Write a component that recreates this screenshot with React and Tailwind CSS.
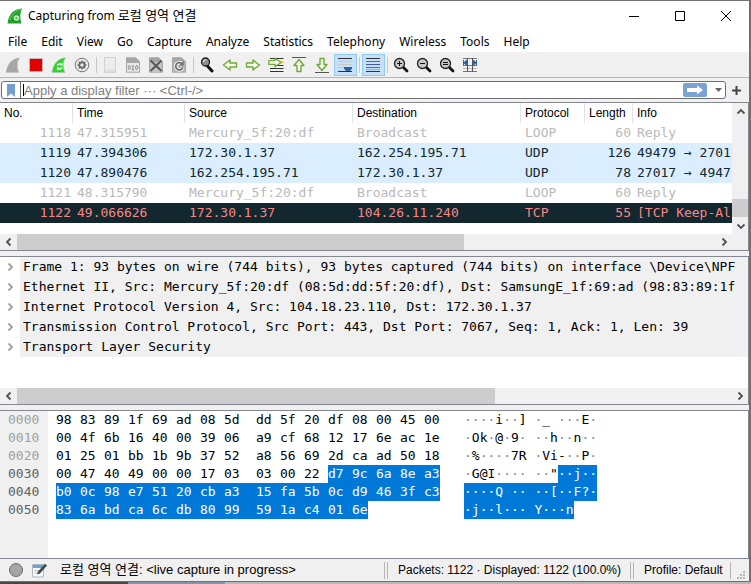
import React from "react";

const UI = "font-['Noto_Sans','Noto_Sans_CJK_KR',sans-serif]";
const GRID = "font-['Liberation_Sans','Noto_Sans_CJK_KR',sans-serif]";
const MONO = "font-['DejaVu_Sans_Mono','Noto_Sans_CJK_KR',monospace]";

const Svg = ({ children, className = "size-4 shrink-0", box = "0 0 16 16" }) => (
  <svg viewBox={box} className={className} fill="none" aria-hidden="true">
    {children}
  </svg>
);

const FIN = "M1 15.5C2 8 6 1.5 14.5 .8 11.5 5 11.8 11 14 15.5Z";
const ARROW_R = "M1.5 6H8V3L14.5 8 8 13V10H1.5Z";
const GREEN = "#73a839";

const Fin = () => (
  <Svg>
    <path d={FIN} fill="#a6a6a6" />
    <path d="M1 15.5H14M14.5 .8C11.5 5 11.8 11 14 15.5" stroke="#c4c4c4" />
  </Svg>
);
const Stop = () => (
  <Svg>
    <rect x="1.5" y="1.5" width="13" height="13" fill="#e00000" stroke="#c8b4b4" />
  </Svg>
);
const Restart = () => (
  <Svg>
    <path d={FIN} fill="#2fd32f" stroke="#a8c8a8" strokeWidth=".8" />
    <path d="M6.400 8.600A2.800 2.800 0 0 1 10.500 7.300M11 10.200A2.800 2.800 0 0 1 6.900 11.700" stroke="#fff" strokeWidth="1.3" />
    <path d="M11.600 5.600V8.600H8.700ZM5.900 13.400V10.400H8.800Z" fill="#fff" />
  </Svg>
);
const Options = () => (
  <Svg>
    <circle cx="8" cy="8" r="6.800" fill="#ececec" stroke="#777" />
    <circle cx="8" cy="8" r="3.6" fill="#6b6b6b" />
    <path d="M8 3.500v9M3.500 8h9M4.800 4.800l6.400 6.400M11.200 4.800l-6.400 6.400" stroke="#6b6b6b" strokeWidth="1.5" />
    <circle cx="8" cy="8" r="1.7" fill="#ececec" />
  </Svg>
);
const OpenFile = () => (
  <Svg>
    <path d="M2.5 .5H13.500V15.5H2.5Z" fill="#ececec" stroke="#d2d2d2" />
    <path d="M3 12.5H13V15H3Z" fill="#dedede" />
  </Svg>
);
const Sheet = () => (
  <>
    <path d="M1.5 .8H10.5L14.5 4.5V15.2H1.5Z" fill="#e9e9e9" stroke="#a6a6a6" />
    <path d="M1.5 .8H10.5L14.5 4.5V6H1.5Z" fill="#a6a6a6" />
  </>
);
const Save = () => (
  <Svg>
    <Sheet />
    <ellipse cx="4.3" cy="10.5" rx="1.1" ry="2" stroke="#888" />
    <path d="M8 8.2V13M7 9h1M6.8 12.8h2.4" stroke="#888" />
    <ellipse cx="11.7" cy="10.5" rx="1.1" ry="2" stroke="#888" />
  </Svg>
);
const CloseFile = () => (
  <Svg>
    <Sheet />
    <path d="M2 5H14V15H2Z" fill="#c4c4c4" />
    <path d="M2.5 3.5L13.5 14M13.5 3.5L2.5 14" stroke="#585858" strokeWidth="2" />
  </Svg>
);
const Reload = () => (
  <Svg>
    <Sheet />
    <path d="M2 4.5H14V15H2Z" fill="#b4b4b4" />
    <path d="M10.8 6.7A3.6 3.6 0 1 0 11.7 10.5" stroke="#fff" strokeWidth="3.400" />
    <path d="M10.8 6.7A3.6 3.6 0 1 0 11.7 10.5" stroke="#6e6e6e" strokeWidth="1.8" />
    <path d="M12.6 4V8.6H8.2Z" fill="#6e6e6e" />
  </Svg>
);
const Find = () => (
  <Svg>
    <path d="M8 8.5L13 14" stroke="#111" strokeWidth="3" strokeLinecap="round" />
    <circle cx="6.5" cy="5" r="4" fill="#8f8f8f" stroke="#222" strokeWidth="1.3" />
    <path d="M4.3 5A2.3 2.3 0 0 1 6.8 2.8" stroke="#eee" />
  </Svg>
);
const Next = () => (
  <Svg>
    <path d={ARROW_R} fill="#f4faec" stroke={GREEN} strokeWidth="1.4" strokeLinejoin="round" />
  </Svg>
);
const Prev = () => (
  <Svg>
    <path d="M14.5 6H8V3L1.5 8 8 13V10H14.5Z" fill="#f4faec" stroke={GREEN} strokeWidth="1.4" strokeLinejoin="round" />
  </Svg>
);
const GoTo = () => (
  <Svg>
    <path d="M2 1.5H15.5M2 11.5H15.5M2 14.5H15.5M9 8.5H15.5" stroke="#333" strokeWidth="1.2" />
    <path d="M11 5h4.5" stroke="#f0c948" strokeWidth="2.5" />
    <path d="M.8 3.7H7V1.2L13 5.5 7 9.8V7.3H.8Z" fill="#f4faec" stroke={GREEN} strokeWidth="1.3" strokeLinejoin="round" />
  </Svg>
);
const First = () => (
  <Svg>
    <path d="M1 .500H15" stroke="#555" />
    <path d="M6 14.5V8.5H3L8 2.5 13 8.5H10V14.5Z" fill="#f4faec" stroke={GREEN} strokeWidth="1.4" strokeLinejoin="round" />
  </Svg>
);
const Last = () => (
  <Svg>
    <path d="M1 15.500H15" stroke="#555" />
    <path d="M6 1.5V7.5H3L8 13.5 13 7.5H10V1.5Z" fill="#f4faec" stroke={GREEN} strokeWidth="1.4" strokeLinejoin="round" />
  </Svg>
);
const AutoScroll = () => (
  <Svg>
    <path d="M1 1.5H15M1 14.5H15" stroke="#333" />
    <path d="M1 4.5H15M1 7.5H15M1 10.5H15" stroke="#c9c9c0" />
    <path d="M7 10H15V11.500L13 14H9L7 11.500Z" fill="#2f62a5" />
  </Svg>
);
const Colorize = () => (
  <Svg>
    <path d="M1 1.5H15M1 14.5H15" stroke="#333" />
    <path d="M1 4.5H15" stroke="#d43c3c" />
    <path d="M1 7.5H15" stroke="#3c5ca8" />
    <path d="M1 10.500H15" stroke="#5a7a5a" />
    <path d="M1 12.500H15" stroke="#b8a8c8" />
  </Svg>
);
const Zoom = ({ d }) => (
  <Svg>
    <path d="M10 10L14 14" stroke="#111" strokeWidth="2.8" strokeLinecap="round" />
    <circle cx="6.5" cy="6.5" r="5" fill="#c6c6c6" stroke="#222" strokeWidth="1.3" />
    <path d={d} stroke="#111" />
  </Svg>
);
const ZoomIn = () => <Zoom d="M4 6.500H9M6.5 4V9" />;
const ZoomOut = () => <Zoom d="M4 6.500H9" />;
const ZoomReset = () => <Zoom d="M4 5.500H9M4 7.5H9" />;
const Resize = () => (
  <Svg>
    <path d="M1 1.5H15M1 8.500H15M1 14.5H15" stroke="#777" />
    <path d="M1 11.500H15" stroke="#bbb" />
    <path d="M5.5 1V15M10.5 1V15" stroke="#555" />
    <path d="M5 2.5V9L1 5.7ZM11 2.5V9L15 5.7Z" fill="#2f62a5" />
    <path d="M1.500 3V8.5M14.500 3V8.5" stroke="#2f62a5" />
  </Svg>
);

const TOOLS = [
  [["Start capture", Fin], ["Stop capture", Stop], ["Restart capture", Restart], ["Capture options", Options]],
  [["Open", OpenFile], ["Save", Save], ["Close", CloseFile], ["Reload", Reload]],
  [
    ["Find packet", Find], ["Previous packet", Prev], ["Next packet", Next], ["Go to packet", GoTo],
    ["First packet", First], ["Last packet", Last], ["Auto scroll", AutoScroll, true],
  ],
  [["Colorize", Colorize, true]],
  [["Zoom in", ZoomIn], ["Zoom out", ZoomOut], ["Normal size", ZoomReset], ["Resize columns", Resize]],
];

const MENUS = ["File", "Edit", "View", "Go", "Capture", "Analyze", "Statistics", "Telephony", "Wireless", "Tools", "Help"];

const COLUMNS = ["No.", "Time", "Source", "Destination", "Protocol", "Length", "Info"];
const LOOP = "bg-white text-[#b9b9b9]";
const UDP = "bg-[#daeeff] text-[#12272e]";
const BAD = "bg-[#12272e] text-[#f78787]";
const PACKETS = [
  [LOOP, "1118", "47.315951", "Mercury_5f:20:df", "Broadcast", "LOOP", "60", "Reply"],
  [UDP, "1119", "47.394306", "172.30.1.37", "162.254.195.71", "UDP", "126", "49479 → 2701"],
  [UDP, "1120", "47.890476", "162.254.195.71", "172.30.1.37", "UDP", "78", "27017 → 4947"],
  [LOOP, "1121", "48.315790", "Mercury_5f:20:df", "Broadcast", "LOOP", "60", "Reply"],
  [BAD, "1122", "49.066626", "172.30.1.37", "104.26.11.240", "TCP", "55", "[TCP Keep-Al"],
];

const DETAILS = [
  "Frame 1: 93 bytes on wire (744 bits), 93 bytes captured (744 bits) on interface \\Device\\NPF",
  "Ethernet II, Src: Mercury_5f:20:df (08:5d:dd:5f:20:df), Dst: SamsungE_1f:69:ad (98:83:89:1f",
  "Internet Protocol Version 4, Src: 104.18.23.110, Dst: 172.30.1.37",
  "Transmission Control Protocol, Src Port: 443, Dst Port: 7067, Seq: 1, Ack: 1, Len: 39",
  "Transport Layer Security",
];

const BYTES = [
  "98 83 89 1f 69 ad 08 5d dd 5f 20 df 08 00 45 00",
  "00 4f 6b 16 40 00 39 06 a9 cf 68 12 17 6e ac 1e",
  "01 25 01 bb 1b 9b 37 52 a8 56 69 2d ca ad 50 18",
  "00 47 40 49 00 00 17 03 03 00 22 d7 9c 6a 8e a3",
  "b0 0c 98 e7 51 20 cb a3 15 fa 5b 0c d9 46 3f c3",
  "83 6a bd ca 6c db 80 99 59 1a c4 01 6e",
].map((row) => row.split(" "));
const SELECTED_FROM = 59;

const toChar = (byte) => {
  const n = parseInt(byte, 16);
  return n >= 32 && n < 127 ? String.fromCharCode(n) : "·";
};

const byteWidth = (i, last) => (i === last ? "w-4" : i === 7 ? "w-8" : "w-6");

const HexRow = ({ row, offset }) => (
  <div className="flex h-[18px]">
    {row.map((b, i) => (
      <span key={i} className={`${byteWidth(i, row.length - 1)} ${offset + i >= SELECTED_FROM ? "bg-[#0078d7] text-white" : ""}`}>
        {b}
      </span>
    ))}
  </div>
);

// The text side puts a gap between the two groups of eight bytes.
const toText = (row) => `${row.slice(0, 8).map(toChar).join("")} ${row.slice(8).map(toChar).join("")}`;

function TextRow({ row, offset }) {
  const text = toText(row);
  const start = Math.max(0, SELECTED_FROM - offset);
  const cut = start > 7 ? start + 1 : start;
  const parts = text.slice(0, cut).split(/(·+)/).filter(Boolean);
  return (
    <div className="flex h-[18px]">
      {parts.map((c, i) => <span key={i} className={c[0] === "·" ? "text-[#888]" : ""}>{c}</span>)}
      {cut < text.length && <span className="bg-[#0078d7] text-white">{text.slice(cut)}</span>}
    </div>
  );
}

const CHEVRONS = {
  left: "M6.5 1.5L3 5l3.5 3.5",
  right: "M3.5 1.5L7 5 3.5 8.5",
  up: "M1.5 6.5L5 3l3.5 3.5",
  down: "M1.5 3.5L5 7l3.5-3.5",
};
const Chevron = ({ dir, className = "text-[#505050]" }) => (
  <svg viewBox="0 0 10 10" className={`size-[10px] ${className}`} fill="none" stroke="currentColor" strokeWidth="1.8" aria-hidden="true">
    <path d={CHEVRONS[dir]} />
  </svg>
);

const ScrollButton = ({ dir }) => (
  <button aria-label={`Scroll ${dir}`} className="flex size-[17px] shrink-0 items-center justify-center">
    <Chevron dir={dir} />
  </button>
);

const HScroll = ({ thumb }) => (
  <div className="flex h-4 shrink-0 items-center bg-[#f0f0f0]">
    <ScrollButton dir="left" />
    <div className="h-full flex-1">
      <div className={`h-full bg-[#cdcdcd] ${thumb}`} />
    </div>
    <ScrollButton dir="right" />
  </div>
);

const PANE = "border-t border-r border-[#828790]";
const Divider = () => <span className="h-[17px] w-px bg-[#b4b4b4]" />;

export default function App() {
  return (
    <div className="flex h-screen flex-col overflow-hidden bg-[#b8b8b8] text-xs text-black">
      <div className="flex min-h-0 flex-1 flex-col border-t border-r-2 border-b border-[#707070] bg-[#f0f0f0]">
        <header className={`flex h-[30px] shrink-0 items-center bg-white pl-[7px] ${UI}`}>
          <Svg>
            <path d="M.5 15.5C1.5 7 6 1 15 .5 12.800 5 12.800 10 14.500 15.500Z" fill="#22a02a" />
            <path d="M3 12C5 6 9 2.5 14 1.5" stroke="#6bd06b" />
            <circle cx="9.500" cy="10" r="2.8" fill="#c4f0c0" />
            <circle cx="9.500" cy="10" r="1.2" fill="#57bd57" />
          </Svg>
          <h1 className="flex-1 pl-[5px]">
            Capturing from <span className="text-[13px]">로컬 영역 연결</span>
          </h1>
          <div className="flex">
            <button aria-label="Minimize" className="flex w-[46px] justify-center">
              <Svg className="size-[10px]" box="0 0 10 10"><path d="M0 5.5H10" stroke="#000" /></Svg>
            </button>
            <button aria-label="Maximize" className="flex w-[46px] justify-center">
              <Svg className="size-[10px]" box="0 0 10 10"><path d="M.5 .5H9.5V9.5H.5Z" stroke="#000" /></Svg>
            </button>
            <button aria-label="Close" className="flex w-[46px] justify-center">
              <Svg className="size-[10px]" box="0 0 10 10"><path d="M0 0L10 10M10 0L0 10" stroke="#000" /></Svg>
            </button>
          </div>
        </header>

        <nav className={`flex h-[21px] shrink-0 items-center gap-[14px] bg-white pl-2 ${UI}`}>
          {MENUS.map((m) => <button key={m}>{m}</button>)}
        </nav>

        <div role="toolbar" className="flex h-[26px] shrink-0 items-center border-b border-[#b4b4b4] pt-px pl-[2px]">
          {TOOLS.map((group, g) => (
            <React.Fragment key={g}>
              {g > 0 && <span className="mx-[2px] h-4 w-px bg-[#c8c8c8]" />}
              {group.map(([label, Icon, on]) => (
                <button
                  key={label}
                  aria-label={label}
                  className={`flex h-[22px] w-[23px] items-center justify-center pr-px ${on ? "border border-[#90c8f6] bg-[#c5e0f7]" : ""}`}
                >
                  <Icon />
                </button>
              ))}
            </React.Fragment>
          ))}
        </div>

        <div className={`flex h-6 shrink-0 items-center pl-px ${GRID}`}>
          <div className="flex h-[18px] flex-1 items-center rounded-[3px] border border-[#6e6e6e] bg-white">
            <button aria-label="Bookmarks" className="flex h-full w-[19px] items-center justify-center border-r border-[#6e6e6e]">
              <Svg className="h-[13px] w-2" box="0 0 8 13"><path d="M0 0H8V13L4 9.500 0 13Z" fill="#729fcf" /></Svg>
            </button>
            <span className="ml-[2px] h-3 w-px bg-black" />
            <input
              aria-label="Display filter"
              placeholder="Apply a display filter ··· <Ctrl-/>"
              className="h-full min-w-0 flex-1 text-[13px] outline-none placeholder:text-[#808080]"
            />
            <button aria-label="Apply filter" className="flex h-[14px] w-6 items-center justify-center rounded-[2px] bg-[#7aa3d3]">
              <Svg className="h-[10px] w-[18px]" box="0 0 18 10"><path d="M1 3H11V.5L17 5 11 9.500V7H1Z" fill="#fff" /></Svg>
            </button>
            <button aria-label="Recent filters" className="flex w-[18px] justify-center pl-1">
              <Svg className="h-1 w-[7px]" box="0 0 7 4"><path d="M0 0H7L3.500 4Z" fill="#666" /></Svg>
            </button>
          </div>
          <button aria-label="Add filter button" className="flex w-[23px] justify-center pr-[2px]">
            <Svg className="size-[9px]" box="0 0 9 9"><path d="M0 4.500H9M4.500 0V9" stroke="#444" strokeWidth="2" /></Svg>
          </button>
        </div>

        <section className={`flex h-[149px] shrink-0 flex-col border-b ${PANE}`}>
          <div className="flex min-h-0 flex-1 bg-white">
            <div className="min-w-0 flex-1 overflow-hidden">
              <table className="w-full table-fixed border-separate border-spacing-0">
                <colgroup>
                  <col className="w-[73px]" />
                  <col className="w-28" />
                  <col className="w-[168px]" />
                  <col className="w-[168px]" />
                  <col className="w-16" />
                  <col className="w-12" />
                  <col />
                </colgroup>
                <thead className={GRID}>
                  <tr className="h-5">
                    {COLUMNS.map((c) => (
                      <th key={c} scope="col" className="border-r border-[#e2e2e2] px-1 py-0 text-left font-normal last:border-r-0">{c}</th>
                    ))}
                  </tr>
                </thead>
                <tbody className={`text-[13px] leading-5 ${MONO}`}>
                  {PACKETS.map(([tone, ...cells]) => (
                    <tr key={cells[0]} className={`h-5 ${tone}`}>
                      {cells.map((c, i) => (
                        <td key={i} className={`whitespace-nowrap p-0 ${i === 0 || i === 5 ? "pr-[2px] text-right" : "pl-1"}`}>
                          {c}
                        </td>
                      ))}
                    </tr>
                  ))}
                </tbody>
              </table>
            </div>
            <div className="flex w-4 shrink-0 flex-col bg-[#f0f0f0]">
              <ScrollButton dir="up" />
              <div className="flex-1" />
              <div className="h-[18px] bg-[#cdcdcd]" />
              <ScrollButton dir="down" />
            </div>
          </div>
          <div className="flex shrink-0 bg-[#f0f0f0]">
            <div className="flex-1"><HScroll thumb="w-[64%]" /></div>
            <div className="w-4" />
          </div>
        </section>

        <section className={`mt-[5px] flex h-[149px] shrink-0 flex-col border-b bg-white ${PANE}`}>
          <ul className={`flex-1 overflow-hidden text-[13px] leading-5 ${MONO}`}>
            {DETAILS.map((d) => (
              <li key={d} className="flex h-5">
                <button aria-label="Expand" className="flex w-5 shrink-0 items-center justify-center">
                  <Chevron dir="right" className="text-[#a0a0a0]" />
                </button>
                <span className="flex-1 overflow-hidden whitespace-pre bg-[#f0f0f0] pl-[3px]">{d}</span>
              </li>
            ))}
          </ul>
          <HScroll thumb="w-[67%]" />
        </section>

        <section className={`mt-[5px] flex min-h-0 flex-1 bg-white text-[13px] leading-[18px] ${PANE} ${MONO}`}>
          <div className="w-12 shrink-0 bg-[#f0f0f0] pl-2">
            {BYTES.map((_, i) => (
              <div key={i} className={`h-[18px] ${i < 3 ? "text-[#a0a0a0]" : "text-[#606060]"}`}>
                {(i * 16).toString(16).padStart(4, "0")}
              </div>
            ))}
          </div>
          <div className="w-[416px] shrink-0 pl-2">
            {BYTES.map((row, i) => <HexRow key={i} row={row} offset={i * 16} />)}
          </div>
          <div className="shrink-0 whitespace-pre">
            {BYTES.map((row, i) => <TextRow key={i} row={row} offset={i * 16} />)}
          </div>
        </section>

        <footer className={`flex h-[23px] shrink-0 items-center border-t border-[#828790] pl-2 ${GRID}`}>
          <Svg>
            <circle cx="8" cy="8" r="6.500" fill="#a6a6a6" stroke="#6a6a6a" />
          </Svg>
          <Svg className="ml-2 size-4">
            <path d="M.5 2.500H11.500V15H.5Z" fill="#fafafa" stroke="#b0b8be" />
            <path d="M1 3H11V6H1Z" fill="#6aa5cf" />
            <path d="M2.500 8.500H8M2.500 11H6" stroke="#bbb" />
            <path d="M5 12.500L6 9.500 13 1.800 15 3.500 8 11.500Z" fill="#3c4a50" />
          </Svg>
          <span className="flex-1 pl-3 text-[13px]">로컬 영역 연결: &lt;live capture in progress&gt;</span>
          <div className="flex items-center gap-[2px]"><Divider /><Divider /></div>
          <span className="w-[242px] pl-[10px]">Packets: 1122 · Displayed: 1122 (100.0%)</span>
          <div className="flex items-center gap-[2px]"><Divider /><Divider /></div>
          <span className="w-24 pl-[10px]">Profile: Default</span>
          <Divider />
          <Svg className="ml-[5px] mr-[3px] size-[10px] self-end" box="0 0 10 10">
            <path d="M7 1h2M4 4h2M7 4h2M1 7h2M4 7h2M7 7h2" stroke="#b8b8b8" strokeWidth="2" />
          </Svg>
        </footer>
      </div>
      <div className="flex h-[2px] shrink-0">
        <div className="w-[17%] bg-[#4a4644]" />
        <div className="w-[13%] bg-[#8a94a8]" />
        <div className="flex-1 bg-[#b8b8b8]" />
      </div>
    </div>
  );
}
